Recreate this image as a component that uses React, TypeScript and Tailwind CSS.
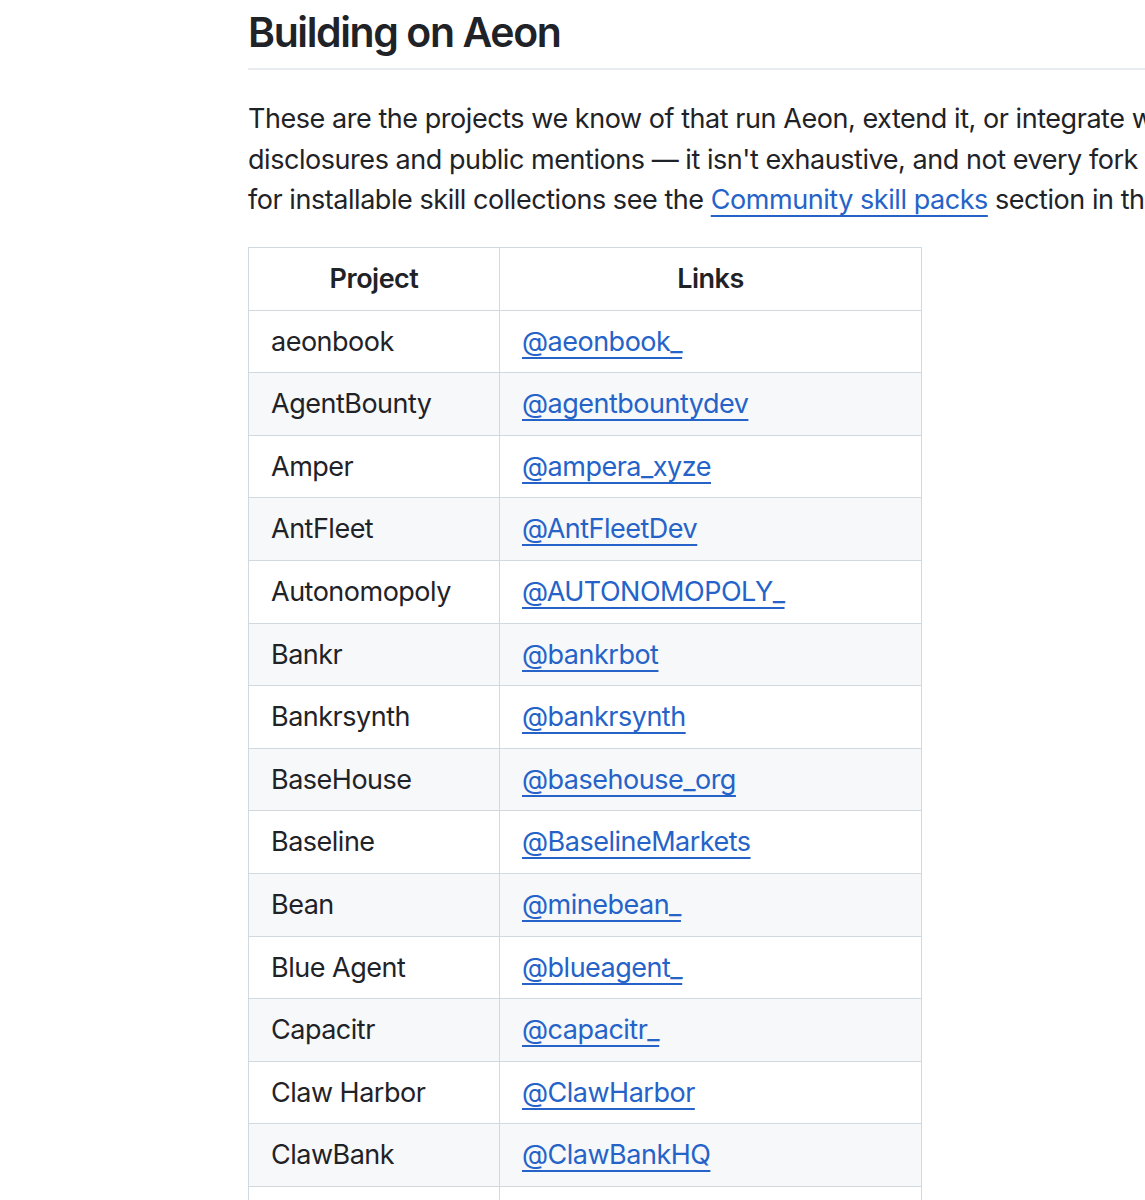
import React from "react";

const rows: [string, string][] = [
  ["aeonbook", "@aeonbook_"],
  ["AgentBounty", "@agentbountydev"],
  ["Amper", "@ampera_xyze"],
  ["AntFleet", "@AntFleetDev"],
  ["Autonomopoly", "@AUTONOMOPOLY_"],
  ["Bankr", "@bankrbot"],
  ["Bankrsynth", "@bankrsynth"],
  ["BaseHouse", "@basehouse_org"],
  ["Baseline", "@BaselineMarkets"],
  ["Bean", "@minebean_"],
  ["Blue Agent", "@blueagent_"],
  ["Capacitr", "@capacitr_"],
  ["Claw Harbor", "@ClawHarbor"],
  ["ClawBank", "@ClawBankHQ"],
  ["Clawdia", "@clawdia"],
];

export default function App() {
  return (
    <div
      className="w-[1145px] h-[1200px] overflow-hidden bg-white text-[#1f2328]"
      style={{ fontFamily: "Inter, 'Noto Sans', 'Liberation Sans', sans-serif" }}
    >
      <div className="ml-[248px] w-[1400px] pt-[7px]">
        <h2 className="text-[41px] leading-[51px] font-semibold pb-[10px] border-b-[2px] border-[#e8ebef] tracking-[-1.4px]">
          Building on Aeon
        </h2>
        <p className="mt-[29px] text-[27px] leading-[40.7px] whitespace-nowrap tracking-[-0.45px]">
          These are the projects we know of that run Aeon, extend it, or integrate with it, compiled from
          <br />
          disclosures and public mentions — it isn't exhaustive, and not every fork is listed. For
          <br />
          for installable skill collections see the{" "}
          <a
            href="#"
            className="text-[#2563c9] underline underline-offset-[6px] decoration-[1.5px]"
          >
            Community skill packs
          </a>{" "}
          section in the README.
        </p>
        <table className="mt-[26px] border-collapse text-[27px] leading-[41.6px] tracking-[-0.5px]">
          <thead>
            <tr className="bg-white">
              <th className="w-[251px] border border-[#d1d9e0] py-[10px] px-[22px] font-semibold text-center">
                Project
              </th>
              <th className="w-[422px] border border-[#d1d9e0] py-[10px] px-[22px] font-semibold text-center">
                Links
              </th>
            </tr>
          </thead>
          <tbody>
            {rows.map(([p, l], i) => (
              <tr key={p} className={i % 2 === 1 ? "bg-[#f6f8fa]" : "bg-white"}>
                <td className="border border-[#d1d9e0] py-[10px] px-[22px] whitespace-nowrap">{p}</td>
                <td className="border border-[#d1d9e0] py-[10px] px-[22px] whitespace-nowrap">
                  <a
                    href="#"
                    className="text-[#2563c9] underline underline-offset-[6px] decoration-[1.5px]"
                  >
                    {l}
                  </a>
                </td>
              </tr>
            ))}
          </tbody>
        </table>
      </div>
    </div>
  );
}
